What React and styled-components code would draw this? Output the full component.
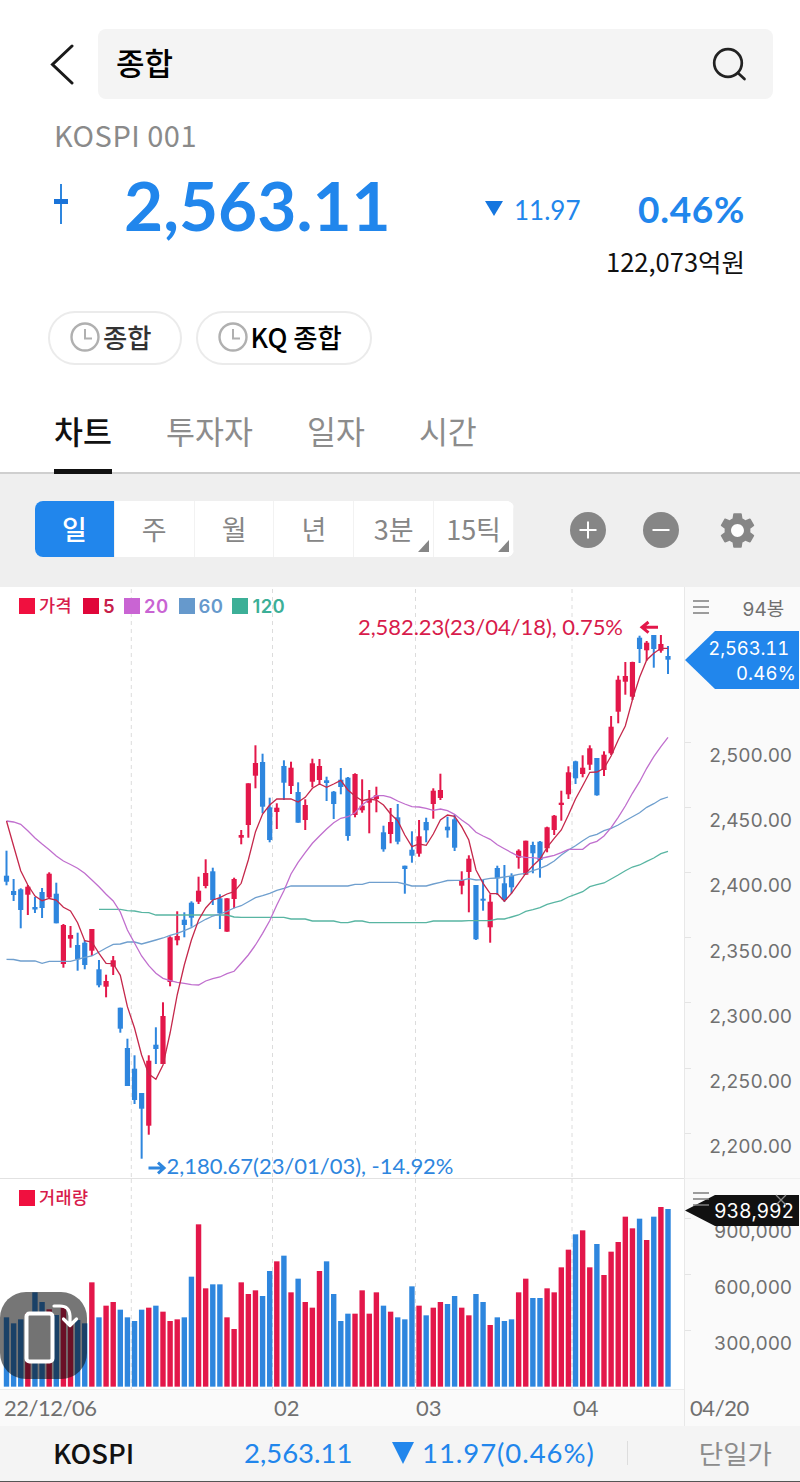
import { createGlobalStyle, styled } from "styled-components";
import { MdSettings } from "react-icons/md";

const RED = "#e3174a";
const BLUE = "#2e86de";

// [color, high, low, body top, body bottom, volume top] in plot pixels
const candles = [
  ["b", 850.7, 885.3, 875.7, 881.7, 412],
  ["b", 879, 901, 891, 895, 430],
  ["b", 888.3, 928.3, 889.3, 910, 418],
  ["r", 885, 915, 886.7, 894.7, 400],
  ["b", 897, 913, 907, 909.5, 337],
  ["b", 888, 918, 892, 908, 366],
  ["r", 872.3, 899, 873.7, 897.5, 388],
  ["b", 882.7, 923.3, 893.7, 923.3, 405],
  ["r", 924, 967.7, 925, 964, 382],
  ["r", 926, 947.7, 935, 938.7, 430],
  ["b", 932.7, 970.7, 945, 959.3, 420],
  ["b", 940, 969.3, 942.7, 965, 430],
  ["r", 929, 956, 929, 950.7, 307],
  ["b", 960, 987.3, 969.3, 985.3, 412],
  ["r", 974.7, 997.3, 981, 986.7, 377],
  ["r", 956, 975, 960.3, 966.7, 366],
  ["b", 1007.7, 1032.7, 1007.7, 1028.7, 389],
  ["b", 1038.7, 1086, 1048, 1086, 412],
  ["b", 1055.3, 1104, 1068.7, 1100, 423],
  ["b", 1093, 1158.7, 1093, 1108.7, 389],
  ["r", 1055.3, 1134.7, 1060.7, 1125.7, 383],
  ["b", 1027.3, 1064, 1044.7, 1049, 377],
  ["r", 1002.3, 1064, 1016, 1064, 395],
  ["r", 936.3, 986.3, 937.3, 982, 423],
  ["r", 911.3, 945.3, 936, 940.3, 418],
  ["b", 912.3, 937.3, 919.7, 925, 412],
  ["b", 901.3, 926.7, 902.7, 917.7, 290],
  ["r", 876.7, 904, 890.7, 901.7, 133],
  ["r", 859.3, 888.3, 873, 886, 325],
  ["b", 867.7, 905, 871.3, 900, 313],
  ["b", 894.3, 929, 898.3, 913.3, 313],
  ["r", 898.3, 931.7, 898.3, 931.7, 412],
  ["r", 877.7, 908.3, 879, 899, 447],
  ["r", 830, 844.3, 835, 837.7, 307],
  ["r", 783.3, 837.7, 783.3, 825, 342],
  ["r", 745.3, 788.3, 763, 775.7, 331],
  ["b", 753.7, 813.3, 762, 806.7, 348],
  ["b", 797.7, 842.3, 807.3, 840, 273],
  ["r", 803.3, 829, 807.7, 812, 244],
  ["b", 760.3, 800, 766, 782.7, 227],
  ["r", 761.7, 794, 767.7, 786, 337],
  ["b", 782.3, 822.7, 792, 822.7, 296],
  ["r", 799.3, 830, 805, 820, 366],
  ["r", 758.7, 787.3, 763.3, 781.7, 383],
  ["r", 759, 785, 766, 780, 273],
  ["b", 776.7, 801, 780.3, 783, 244],
  ["b", 791, 819, 791.7, 804, 342],
  ["b", 768, 794.3, 779.7, 787, 423],
  ["b", 777, 840.7, 777.7, 836, 401],
  ["r", 773.3, 817.3, 774, 815, 401],
  ["r", 779.3, 812.7, 805.7, 810.3, 331],
  ["r", 790, 833.3, 799, 802.7, 401],
  ["r", 786.7, 812.3, 795.3, 799, 337],
  ["b", 825.7, 851.7, 832.3, 849.3, 377],
  ["r", 808, 843.3, 822, 834, 395],
  ["b", 804, 844.3, 817.3, 841.7, 412],
  ["b", 865.7, 893.7, 865.7, 869, 418],
  ["b", 831.3, 862.7, 849.7, 855.7, 319],
  ["r", 820, 856.7, 836.3, 853.7, 377],
  ["b", 817.7, 842.3, 822, 830.3, 406],
  ["r", 788.3, 818.7, 790.7, 804, 383],
  ["r", 773.7, 800, 790, 798, 366],
  ["b", 816.7, 837.7, 826.7, 830.3, 372],
  ["b", 815, 851, 819.3, 847.7, 348],
  ["r", 871.3, 894.3, 880, 885.7, 383],
  ["r", 855.3, 912.3, 858.7, 872, 406],
  ["b", 885, 940, 885, 939.3, 342],
  ["b", 880, 910.7, 898.7, 900.7, 366],
  ["r", 894.3, 942.7, 901.7, 927.3, 435],
  ["b", 865.7, 895, 868, 878.3, 412],
  ["b", 865, 901.7, 883.3, 900, 423],
  ["b", 873.3, 893.3, 876, 887.3, 418],
  ["r", 849.3, 868.7, 850.7, 857.7, 337],
  ["r", 840.7, 874.7, 840.7, 874.7, 296],
  ["b", 841.7, 873.3, 845, 853.3, 354],
  ["b", 841, 877.7, 841.7, 860, 354],
  ["r", 826.7, 852.3, 827.3, 848.3, 325],
  ["r", 815, 835, 815.7, 830, 337],
  ["r", 790.7, 820.7, 802.7, 805, 262],
  ["r", 766.3, 799, 772.3, 794.3, 209],
  ["b", 760.7, 784, 761.3, 778.3, 163],
  ["r", 755.3, 777.3, 767.7, 774, 151],
  ["r", 745.3, 770, 748.3, 764.7, 262],
  ["b", 758, 795.7, 758, 795.3, 192],
  ["r", 751.3, 776, 754.7, 770, 285],
  ["r", 716, 755, 726.7, 753.3, 215],
  ["r", 675.7, 723.3, 679.7, 711.7, 186],
  ["r", 662, 694.7, 676, 681.7, 110],
  ["r", 661.7, 700, 662, 696.7, 145],
  ["b", 635.7, 663, 637.7, 649, 116],
  ["r", 641, 660.7, 642.7, 650.3, 180],
  ["b", 635, 667.7, 635, 649, 110],
  ["r", 635, 652.7, 644, 650.7, 81],
  ["b", 646, 674, 656, 659.7, 87],
];

const ma5 = [
  821, 846, 870.7, 885, 896, 900.7, 898.5, 900, 907.3, 911, 922.7, 940.7, 942,
  953.3, 963.3, 963.7, 975.3, 1006.7, 1028, 1055, 1074, 1079.3, 1065, 1033, 995,
  965, 940, 920, 908, 900, 897.7, 894, 891.7, 883.3, 860, 831.7, 814, 805, 799,
  799, 799, 802, 797.3, 788.3, 784, 787.3, 784, 780.3, 790, 796, 800.7, 799, 800,
  805, 814, 820.7, 835, 846.7, 844, 845.3, 834, 820, 815, 816.3, 826.7, 840,
  870, 883.3, 893.7, 893.7, 901.3, 893.3, 883.3, 873.3, 865.7, 859, 847.3, 838.3,
  830, 815, 799, 785.7, 772.3, 772, 768.3, 756, 740, 726, 700, 677.3, 660, 653.3,
  648.3, 648.3,
];

const ma20 = [
  821, 822, 824.3, 830.7, 838, 844, 849.7, 856, 861, 864.5, 868.3, 873.3, 880,
  886.7, 894.3, 901, 912, 930, 943, 956, 965.7, 973.3, 978.3, 980.7, 982.3, 983.3,
  984.7, 985, 981, 978.7, 977, 973.7, 971.3, 963.3, 955, 945, 933.3, 920.7, 905,
  890.7, 874, 862.3, 852.7, 843.3, 836, 829, 822.7, 818.3, 816.7, 812.7, 805,
  799.3, 795.7, 795.7, 797.3, 801, 804, 806.7, 807, 808.3, 810.3, 809, 810.7,
  814.3, 820, 825, 832.3, 836, 839.3, 844.7, 848.7, 852.7, 856.3, 857.3, 857.7,
  858.7, 857, 855.3, 852.7, 849.3, 849.3, 849.3, 843.7, 841.3, 836, 827.7, 817.3,
  806, 793.3, 781.7, 768.3, 756.7, 746.7, 737.3,
];

const ma60 = [
  959.3, 959.5, 961, 961, 961, 963.3, 961.3, 961.3, 961.3, 961.3, 959.3, 957.3,
  956, 952, 948, 944.3, 944, 942, 942, 944, 942, 940, 938, 935.3, 933.3, 930.7,
  927.7, 923.3, 919.3, 916, 914, 911.3, 908, 905.7, 901.7, 897.7, 895.7, 893.3,
  890.3, 888.3, 886, 886, 886, 886, 886, 886, 886, 886, 886, 884.3, 884.3, 882.3,
  882.3, 882.3, 882.3, 882.3, 884, 886, 886, 886, 884, 882.3, 880.5, 880.3, 880.3,
  878.7, 880, 879.7, 878.3, 878, 877, 876, 874.3, 873.3, 870.7, 868.3, 865.3, 861,
  855, 850, 845.7, 840.7, 836.3, 834.3, 830.7, 828.3, 825, 820.7, 816.7, 812.7,
  807.3, 803.7, 799.3, 797,
];

// starts at the 14th candle
const ma120 = [
  909.3, 909.3, 909.3, 909.3, 910.7, 911, 912.3, 912.7, 915, 915, 915, 915, 915,
  915, 915, 915, 915, 915, 915, 917, 917.3, 917.3, 917.3, 917.3, 917.3, 917.3,
  917.3, 919, 919, 919, 921, 921, 921, 921, 922.7, 922.7, 921, 921, 922.7, 922.7,
  922.7, 922.7, 922.7, 922.7, 922.7, 922.7, 922.7, 921, 921, 921, 921, 921, 920.7,
  920.7, 920.7, 920.7, 919, 919, 917, 915, 911.3, 909.7, 907.7, 904.3, 902.3,
  900.7, 897, 894.3, 891.7, 886.7, 884.7, 883, 879, 875, 870.7, 867, 865, 861.3,
  858, 853.7, 851.3,
];

const periods = [
  { label: "일", active: true },
  { label: "주" },
  { label: "월" },
  { label: "년" },
  { label: "3분", more: true },
  { label: "15틱", more: true },
];

const legends = [
  { label: "가격", color: "#f0103f", text: "#d81b4b", gap: 11 },
  { label: "5", color: "#e0063a", text: "#c7204a", gap: 9 },
  { label: "20", color: "#c964d3", text: "#c964d3", gap: 10 },
  { label: "60", color: "#6699cc", text: "#6699cc", gap: 9 },
  { label: "120", color: "#3caf97", text: "#3caf97", gap: 0 },
];

const prices = [
  "2,500.00",
  "2,450.00",
  "2,400.00",
  "2,350.00",
  "2,300.00",
  "2,250.00",
  "2,200.00",
];

const gridX = [131.3, 272.5, 415.5, 572];

const px = (i) => 6.5 + i * 7.113;
const fill = (c) => (c === "r" ? RED : BLUE);
const points = (values, start = 0) =>
  values.map((y, i) => `${px(i + start).toFixed(1)},${y}`).join(" ");

function PriceChart() {
  return (
    <Plot viewBox="0 587 684 591" width="684" height="591">
      {gridX.map((x) => (
        <GridLine key={x} x1={x} x2={x} y1="589" y2="1178" />
      ))}
      {candles.map(([c, high, low, top, bottom], i) => (
        <g key={i} fill={fill(c)}>
          <rect x={px(i) - 1} y={high} width="2" height={low - high} />
          <rect x={px(i) - 2.6} y={top} width="5.2" height={bottom - top} />
        </g>
      ))}
      <Line points={points(ma120, 13)} stroke="#58b5a2" />
      <Line points={points(ma60)} stroke="#6f9fce" />
      <Line points={points(ma20)} stroke="#c06fce" />
      <Line points={points(ma5)} stroke="#c5284b" />
      <Note x="358" y="635" textLength="265" fill="#d81b4b">
        2,582.23(23/04/18), 0.75%
      </Note>
      <Arrow d="M658 627.3H643M648.5 622l-6.5 5.3 6.5 5.3" stroke="#e3174a" />
      <Note x="166.500" y="1174" textLength="287" fill={BLUE}>
        2,180.67(23/01/03), -14.92%
      </Note>
      <Arrow d="M148.500 1168H163M158 1162.700l6 5.3-6 5.3" stroke={BLUE} />
    </Plot>
  );
}

function VolumeChart() {
  return (
    <Plot viewBox="0 1179 684 210" width="684" height="210">
      {gridX.map((x) => (
        <GridLine key={x} x1={x} x2={x} y1="1179" y2="1389" />
      ))}
      {candles.map(([c, , , , , top], i) => (
        <rect
          key={i}
          x={px(i) - 2.7}
          y={1180 + top / 3}
          width="5.4"
          height={(620 - top) / 3}
          fill={fill(c)}
        />
      ))}
    </Plot>
  );
}

export default function App() {
  return (
    <Screen>
      <GlobalStyle />
      <SearchRow>
        <svg width="26" height="42" viewBox="0 0 26 42" fill="none">
          <path d="M23 3L3.500 21.500 23 40" stroke="#1a1a1a" strokeWidth="3" strokeLinecap="round" />
        </svg>
        <SearchBox>
          <span>종합</span>
          <svg width="36" height="36" viewBox="0 0 36 36" fill="none" stroke="#222" strokeWidth="2.700" strokeLinecap="round">
            <circle cx="16" cy="17" r="13.800" />
            <path d="M26 27L32.500 33" />
          </svg>
        </SearchBox>
      </SearchRow>

      <Code>KOSPI 001</Code>
      <Quote>
        <Mark width="14" height="40" viewBox="0 0 14 40">
          <path d="M6 0h2v40H6z" fill={BLUE} />
          <path d="M0 15h14v5H0z" fill="#1a73d8" />
        </Mark>
        <Price>2,563.11</Price>
        <Change>
          <svg width="18" height="15" viewBox="0 0 18 15">
            <path d="M0 0h18L9 15z" fill="#1576df" />
          </svg>
          <span>11.97</span>
        </Change>
        <Rate>0.46%</Rate>
      </Quote>
      <Amount>122,073억원</Amount>

      <Chips>
        <Chip $color="#333">
          <Clock />
          <span>종합</span>
        </Chip>
        <Chip $color="#000">
          <Clock />
          <span>KQ 종합</span>
        </Chip>
      </Chips>

      <Tabs>
        <Tab $active>차트</Tab>
        <Tab>투자자</Tab>
        <Tab>일자</Tab>
        <Tab>시간</Tab>
      </Tabs>

      <Toolbar>
        <Periods>
          {periods.map(({ label, active, more }) => (
            <Period key={label} $active={active} $more={more}>
              {label}
            </Period>
          ))}
        </Periods>
        <Tools>
          <svg width="36" height="36" viewBox="0 0 36 36">
            <circle cx="18" cy="18" r="18" fill="#868686" />
            <path d="M9.500 18h17M18 9.500v17" stroke="#fff" strokeWidth="2" />
          </svg>
          <svg width="36" height="36" viewBox="0 0 36 36">
            <circle cx="18" cy="18" r="18" fill="#868686" />
            <path d="M9.500 18h17" stroke="#fff" strokeWidth="2" />
          </svg>
          <Gear>
            <MdSettings size={43} />
          </Gear>
        </Tools>
      </Toolbar>

      <ChartGrid>
        <Pane>
          <PriceChart />
          <Legend>
            {legends.map(({ label, color, text, gap }, i) => (
              <LegendItem key={label} $color={color} $text={text} $gap={gap} $korean={i === 0}>
                {label}
              </LegendItem>
            ))}
          </Legend>
        </Pane>
        <Axis>
          <AxisHead>
            <Menu />
            <span>94봉</span>
          </AxisHead>
          <PriceScale>
            {prices.map((p) => (
              <ScaleRow key={p} $height={65.2}>
                {p}
              </ScaleRow>
            ))}
          </PriceScale>
          <PriceTag>
            <span>2,563.11</span>
            <span>0.46%</span>
          </PriceTag>
        </Axis>

        <Pane $line>
          <VolumeChart />
          <Legend>
            <LegendItem $color="#f0103f" $text="#d81b4b" $gap={0} $korean>
              거래량
            </LegendItem>
          </Legend>
          <RotateButton>
            <svg width="87" height="87" viewBox="0 0 87 87" fill="none" stroke="#fff">
              <rect x="26.500" y="21.500" width="26" height="48" rx="3" fill="#737373" strokeWidth="4" />
              <path d="M54 14h6q9.500 0 10 10v7M63.500 27l6.500 6.500 6.500-6.500" strokeWidth="3.200" strokeLinecap="round" strokeLinejoin="round" />
            </svg>
          </RotateButton>
        </Pane>
        <Axis $line>
          <VolumeScale>
            <ScaleRow $height={56}>900,000</ScaleRow>
            <ScaleRow $height={56}>600,000</ScaleRow>
            <ScaleRow $height={56}>300,000</ScaleRow>
          </VolumeScale>
          <VolumeTag>938,992</VolumeTag>
          <TagIcons>
            <Menu />
            <svg width="12" height="12" viewBox="0 0 12 12">
              <path d="M1 1l10 10M11 1L1 11" stroke="#8b8b8b" strokeWidth="1.300" />
            </svg>
          </TagIcons>
        </Axis>

        <Dates>
          <span>22/12/06</span>
          <span>02</span>
          <span>03</span>
          <span>04</span>
        </Dates>
        <LastDate>04/20</LastDate>
      </ChartGrid>

      <Footer>
        <FooterName>KOSPI</FooterName>
        <FooterPrice>2,563.11</FooterPrice>
        <FooterChange>
          <svg width="22" height="22" viewBox="0 0 22 22">
            <path d="M0 0h22L11 22z" fill="#2186ec" />
          </svg>
          11.97(0.46%)
        </FooterChange>
        <FooterMode>단일가</FooterMode>
      </Footer>
    </Screen>
  );
}

function Clock() {
  return (
    <svg width="30" height="32" viewBox="0 0 30 32" fill="none" stroke="#b0b0b0">
      <circle cx="15" cy="15" r="13.500" strokeWidth="2.400" />
      <path d="M15 7v9.500h7" strokeWidth="2" />
    </svg>
  );
}

function Menu() {
  return (
    <svg width="16" height="14" viewBox="0 0 16 14">
      <path d="M0 1h16M0 7h16M0 13h16" stroke="#7d7d7d" strokeWidth="1.400" />
    </svg>
  );
}

const GlobalStyle = createGlobalStyle`
  * {
    box-sizing: border-box;
  }

  body {
    margin: 0;
    background-color: white;
    font-family: "Noto Sans CJK KR", sans-serif;
  }

  svg {
    display: block;
    flex: none;
  }
`;

const Screen = styled.main`
  display: flex;
  flex-direction: column;
  width: 800px;
  height: 1482px;
  overflow: hidden;
  border-bottom: 1px solid #555;
`;

const SearchRow = styled.header`
  display: flex;
  align-items: center;
  gap: 23px;
  height: 70px;
  margin: 29px 27px 0 49px;
`;

const SearchBox = styled.div`
  display: flex;
  align-items: center;
  justify-content: space-between;
  flex: 1;
  height: 70px;
  padding: 0 25px 0 18px;
  border-radius: 8px;
  background-color: #f4f4f4;
  color: #000;
  font-size: 31px;
  font-weight: 500;
  line-height: 66px;

  span {
    height: 70px;
  }
`;

const Code = styled.p`
  height: 40px;
  margin: 15px 0 0 54px;
  color: #8a8a8a;
  font-size: 29px;
  font-weight: 400;
  letter-spacing: 0.5px;
  line-height: 40px;
`;

const Quote = styled.section`
  display: flex;
  align-items: center;
  height: 80px;
  margin: 14px 55px 0 54px;
  color: #2186ec;
  font-family: Lato, sans-serif;
`;

const Mark = styled.svg`
  margin-bottom: 8px;
`;

const Price = styled.strong`
  width: 360px;
  padding: 0 0 6px 56px;
  font-size: 67.500px;
  font-weight: 700;
  line-height: 74px;
`;

const Change = styled.div`
  display: flex;
  align-items: center;
  gap: 11px;
  margin-left: 57px;
  font-size: 26px;

  span {
    padding-top: 4px;
  }
`;

const Rate = styled.strong`
  margin-left: auto;
  font-size: 37px;
  font-weight: 700;
  letter-spacing: 0.7px;
`;

const Amount = styled.p`
  height: 36px;
  margin: -5px 55px 0 0;
  color: #111;
  font-size: 25.500px;
  line-height: 36px;
  text-align: right;
`;

const Chips = styled.div`
  display: flex;
  gap: 14px;
  margin: 32px 0 0 48px;
`;

const Chip = styled.button`
  display: flex;
  align-items: center;
  gap: 3px;
  height: 54px;
  padding: 0 28px 0 20px;
  border: 2px solid #ebebeb;
  border-radius: 27px;
  background-color: white;
  color: ${({ $color }) => $color};
  font-family: inherit;
  font-size: 26.400px;
  font-weight: 500;

  span {
    padding-bottom: 4px;
  }
`;

const Tabs = styled.nav`
  display: flex;
  gap: 54px;
  height: 109px;
  padding-left: 54px;
  border-bottom: 2px solid #cfcfcf;
`;

const Tab = styled.div`
  height: 109px;
  padding-top: 42px;
  border-bottom: ${({ $active }) => ($active ? "5px solid #111" : "none")};
  color: ${({ $active }) => ($active ? "#111" : "#8c8c8c")};
  font-size: 31.500px;
  font-weight: ${({ $active }) => ($active ? 500 : 400)};
  line-height: 46px;
`;

const Toolbar = styled.section`
  display: flex;
  align-items: flex-start;
  justify-content: space-between;
  flex: none;
  height: 113px;
  padding: 27px 41px 0 35px;
  background-color: #efefef;
`;

const Periods = styled.div`
  display: flex;
  width: 479px;
  height: 56px;
  border-radius: 8px;
  overflow: hidden;
  background-color: white;
`;

const Period = styled.div`
  position: relative;
  flex: 1;
  border-right: 1px solid #f2f2f2;
  background-color: ${({ $active }) => ($active ? "#2186ec" : "white")};
  color: ${({ $active }) => ($active ? "white" : "#868686")};
  font-size: 27px;
  font-weight: ${({ $active }) => ($active ? 500 : 400)};
  line-height: 56px;
  text-align: center;

  &::after {
    content: "";
    display: ${({ $more }) => ($more ? "block" : "none")};
    position: absolute;
    right: 4px;
    bottom: 5px;
    border-left: 11px solid transparent;
    border-bottom: 12px solid #868686;
  }
`;

const Tools = styled.div`
  display: flex;
  align-items: center;
  gap: 37px;
  height: 58px;
`;

const Gear = styled.div`
  display: flex;
  justify-content: center;
  width: 43px;
  color: #868686;
  background: radial-gradient(circle, white 9px, transparent 10px);
`;

const ChartGrid = styled.section`
  display: grid;
  grid-template-columns: 684px 116px;
  grid-template-rows: 591px 211px 37px;
  flex: none;
`;

const Pane = styled.div`
  position: relative;
  border-top: ${({ $line }) => ($line ? "1px solid #e2e2e2" : "none")};
`;

const Plot = styled.svg`
  display: block;
`;

const GridLine = styled.line`
  stroke: #dcdcdc;
  stroke-width: 1;
  stroke-dasharray: 4 4;
`;

const Line = styled.polyline`
  fill: none;
  stroke-width: 1.3;
`;

const Note = styled.text`
  font-family: Lato, sans-serif;
  font-size: 22px;
`;

const Arrow = styled.path`
  fill: none;
  stroke-width: 3;
`;

const Legend = styled.div`
  display: flex;
  position: absolute;
  top: 9px;
  left: 19px;
`;

const LegendItem = styled.div`
  display: flex;
  align-items: center;
  gap: 4px;
  height: 20px;
  margin-right: ${({ $gap }) => $gap}px;
  color: ${({ $text }) => $text};
  font-family: Inter, "Noto Sans CJK KR", sans-serif;
  font-size: ${({ $korean }) => ($korean ? 17.5 : 18.5)}px;
  font-weight: ${({ $korean }) => ($korean ? 500 : 600)};
  letter-spacing: 0.4px;
  line-height: 20px;

  &::before {
    content: "";
    width: 16px;
    height: 16px;
    background-color: ${({ $color }) => $color};
  }
`;

const Axis = styled.div`
  position: relative;
  border-left: 1px solid #e8e8e8;
  border-top: ${({ $line }) => ($line ? "1px solid #f0f0f0" : "none")};
  background-color: #fafafa;
  color: #707070;
  font-family: Inter, "Noto Sans CJK KR", sans-serif;
  font-size: 19px;
  font-variant-numeric: tabular-nums;
  letter-spacing: -0.15px;
`;

const AxisHead = styled.div`
  display: flex;
  align-items: center;
  justify-content: space-between;
  height: 40px;
  padding: 0 16px 0 8px;
`;

const PriceScale = styled.div`
  margin-top: 96px;
`;

const VolumeScale = styled.div`
  margin-top: 25px;
`;

const ScaleRow = styled.div`
  position: relative;
  height: ${({ $height }) => $height}px;
  padding-right: 8px;
  line-height: ${({ $height }) => $height}px;
  text-align: right;

  &::before {
    content: "";
    position: absolute;
    top: ${({ $height }) => $height / 2 - 14}px;
    left: 0;
    width: 6px;
    height: 1px;
    background-color: #e4e4e4;
  }
`;

const PriceTag = styled.div`
  display: flex;
  flex-direction: column;
  align-items: flex-end;
  position: absolute;
  top: 44px;
  left: 0;
  width: 114px;
  height: 58px;
  padding-top: 5px;
  background-color: #2186ec;
  clip-path: polygon(0 50%, 30px 0, 100% 0, 100% 100%, 30px 100%);
  color: white;
  font-size: 18.500px;
  line-height: 25px;

  span:first-child {
    margin-right: 10px;
  }

  span:last-child {
    margin-right: 3px;
    letter-spacing: 0.2px;
  }
`;

const VolumeTag = styled.div`
  position: absolute;
  top: 16px;
  left: 0;
  width: 114px;
  height: 31px;
  padding-right: 5px;
  background-color: #111;
  clip-path: polygon(0 50%, 30px 0, 100% 0, 100% 100%, 30px 100%);
  color: white;
  font-size: 19.500px;
  line-height: 32px;
  text-align: right;
`;

const TagIcons = styled.div`
  display: flex;
  justify-content: space-between;
  position: absolute;
  top: 13px;
  left: 8px;
  width: 94px;

  svg:last-child {
    margin-top: 2px;
  }
`;

const RotateButton = styled.div`
  position: absolute;
  top: 113px;
  left: 0;
  width: 87px;
  height: 87px;
  border-radius: 26px;
  background-color: rgba(10, 10, 10, 0.56);
`;

const Dates = styled.div`
  display: grid;
  grid-template-columns: 270px 142px 157px 1fr;
  padding-left: 4px;
  border-top: 1px solid #ececec;
  background-color: #fafafa;
  color: #707070;
  font-family: Lato, sans-serif;
  font-size: 22px;
  line-height: 36px;

  span:first-child {
    letter-spacing: -0.5px;
  }
`;

const LastDate = styled.div`
  padding-left: 5px;
  border-left: 1px solid #e8e8e8;
  background-color: #fafafa;
  color: #707070;
  font-family: Lato, sans-serif;
  font-size: 22px;
  letter-spacing: -0.4px;
  line-height: 38px;
`;

const Footer = styled.footer`
  display: flex;
  align-items: center;
  flex: 1;
  padding: 0 28px 2px 53px;
  background-color: #f4f4f4;
  color: #2186ec;
  font-family: Lato, sans-serif;
  font-size: 27.500px;
`;

const FooterName = styled.span`
  width: 191px;
  padding-bottom: 2px;
  color: #111;
  font-family: "Noto Sans CJK KR", sans-serif;
  font-size: 27.500px;
  font-weight: 500;
`;

const FooterPrice = styled.span`
  width: 148px;
`;

const FooterChange = styled.span`
  display: flex;
  align-items: center;
  gap: 8px;
  width: 235px;
  letter-spacing: 0.95px;
`;

const FooterMode = styled.span`
  flex: 1;
  border-left: 1px solid #ddd;
  color: #8c8c8c;
  font-family: "Noto Sans CJK KR", sans-serif;
  font-size: 26.500px;
  line-height: 24px;
  text-align: right;
`;
